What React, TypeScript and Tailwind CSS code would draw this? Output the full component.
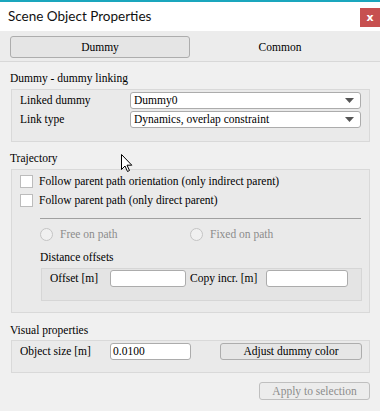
import React from "react";

// each label names its own family
const txt = "font-['Times_New_Roman','Liberation_Serif',serif] text-[11.5px] leading-[13px] text-black";
const dim = "font-['Times_New_Roman','Liberation_Serif',serif] text-[11.5px] leading-[13px] text-[#8c8c8c]";

function Combo({ value }: { value: string }) {
  return (
    <div className="w-[231px] h-[17px] bg-white border border-[#acacac] rounded-[3px] flex items-center justify-between pl-[3px] pr-[6px]">
      <span className={txt}>{value}</span>
      <svg width="9" height="5" viewBox="0 0 9 5">
        <path d="M0 0 L9 0 L4.5 5 Z" fill="#555" />
      </svg>
    </div>
  );
}

function Checkbox({ label }: { label: string }) {
  return (
    <div className="flex items-center h-[13px] gap-[6px]">
      <div className="w-[13px] h-[13px] bg-white border border-[#bcbcbc]" />
      <span className={txt}>{label}</span>
    </div>
  );
}

function Radio({ label }: { label: string }) {
  return (
    <div className="flex items-center gap-[7px]">
      <div className="w-[13px] h-[13px] rounded-full border border-[#c4c4c4] bg-[#f0f0f0]" />
      <span className={dim}>{label}</span>
    </div>
  );
}

function Input({ w, value }: { w: string; value?: string }) {
  return (
    <div className={`${w} h-[17px] bg-white border border-[#acacac] rounded-[3px] flex items-center pl-[2px]`}>
      {value && <span className={txt}>{value}</span>}
    </div>
  );
}

export default function App() {
  return (
    <div className="w-[380px] h-[411px] bg-[#f0f0f0] relative overflow-hidden font-['Times_New_Roman','Liberation_Serif',serif]">
      <div className="h-[2px] bg-[#1aa6bd]" />
      {/* title bar */}
      <div className="h-[29px] bg-white flex justify-between">
        <span className="pl-[8px] pt-[6px] text-[13.5px] leading-[16px] text-[#111] font-['Lato',sans-serif]">
          Scene Object Properties
        </span>
        <div className="mt-[6px] w-[20px] h-[19px] bg-[#c75050] flex items-center justify-center">
          <span className="text-white text-[11px] font-bold leading-none font-['DejaVu_Sans',sans-serif]">x</span>
        </div>
      </div>

      {/* tabs */}
      <div className="h-[31px] bg-[#ececec] border-b border-[#d8d8d8] flex px-[10px] pt-[5px]">
        <div className="w-[180px] h-[22px] bg-[#e5e5e5] border border-[#adadad] rounded-[3px] flex items-center justify-center">
          <span className={txt}>Dummy</span>
        </div>
        <div className="w-[180px] h-[22px] flex items-center justify-center">
          <span className={txt}>Common</span>
        </div>
      </div>

      {/* Dummy - dummy linking */}
      <div className="mt-[8px] h-[16px] pl-[10px] flex items-center">
        <span className={txt}>Dummy - dummy linking</span>
      </div>
      <div className="mt-[3px] ml-[11px] w-[359px] h-[53px] bg-[#eaeaea] border border-[#d9d9d9] pt-[2px] flex flex-col gap-[2px]">
        <div className="flex items-center pl-[8px]">
          <span className={`w-[110px] ${txt}`}>Linked dummy</span>
          <Combo value="Dummy0" />
        </div>
        <div className="flex items-center pl-[8px]">
          <span className={`w-[110px] ${txt}`}>Link type</span>
          <Combo value="Dynamics, overlap constraint" />
        </div>
      </div>

      {/* Trajectory */}
      <div className="mt-[8px] h-[16px] pl-[10px] flex items-center">
        <span className={txt}>Trajectory</span>
      </div>
      <div className="mt-[3px] ml-[11px] w-[359px] h-[144px] bg-[#eaeaea] border border-[#d9d9d9] pt-[5px] pl-[8px] flex flex-col">
        <div className="flex flex-col gap-[6px]">
          <Checkbox label="Follow parent path orientation (only indirect parent)" />
          <Checkbox label="Follow parent path (only direct parent)" />
        </div>
        <div className="mt-[11px] ml-[20px] w-[321px] h-px bg-[#a0a0a0]" />
        <div className="mt-[9px] ml-[20px] flex">
          <div className="w-[150px]">
            <Radio label="Free on path" />
          </div>
          <Radio label="Fixed on path" />
        </div>
        <div className="mt-[8px] ml-[20px] h-[16px] flex items-center">
          <span className={txt}>Distance offsets</span>
        </div>
        <div className="mt-[3px] ml-[21px] w-[321px] h-[33px] bg-[#e4e4e4] border border-[#d6d6d6] pt-[1px] pl-[8px] flex items-start">
          <div className="w-[60px] h-[17px] flex items-center">
            <span className={txt}>Offset [m]</span>
          </div>
          <Input w="w-[76px]" />
          <div className="w-[80px] pl-[4px] h-[17px] flex items-center">
            <span className={txt}>Copy incr. [m]</span>
          </div>
          <Input w="w-[82px]" />
        </div>
      </div>

      {/* Visual properties */}
      <div className="mt-[9px] h-[16px] pl-[10px] flex items-center">
        <span className={txt}>Visual properties</span>
      </div>
      <div className="mt-[2px] ml-[11px] w-[359px] h-[33px] bg-[#eaeaea] border border-[#d9d9d9] pt-[2px] pl-[8px] flex items-start">
        <div className="w-[90px] h-[17px] flex items-center">
          <span className={txt}>Object size [m]</span>
        </div>
        <Input w="w-[81px]" value="0.0100" />
        <div className="ml-[29px] w-[142px] h-[17px] bg-[#e6e6e6] border border-[#adadad] rounded-[3px] flex items-center justify-center">
          <span className={txt}>Adjust dummy color</span>
        </div>
      </div>

      <div className="mt-[9px] flex justify-end pr-[10px]">
        <div className="w-[111px] h-[18px] bg-[#ececec] border border-[#bfbfbf] rounded-[3px] flex items-center justify-center">
          <span className={dim}>Apply to selection</span>
        </div>
      </div>

      {/* mouse cursor */}
      <svg className="absolute left-[121px] top-[154px]" width="12" height="19" viewBox="0 0 12 19">
        <path d="M0.5 0.5 L0.5 15.5 L4 12 L6.5 17.5 L8.5 16.5 L6 11.2 L10.8 11.2 Z" fill="white" stroke="black" strokeWidth="1" />
      </svg>
    </div>
  );
}
